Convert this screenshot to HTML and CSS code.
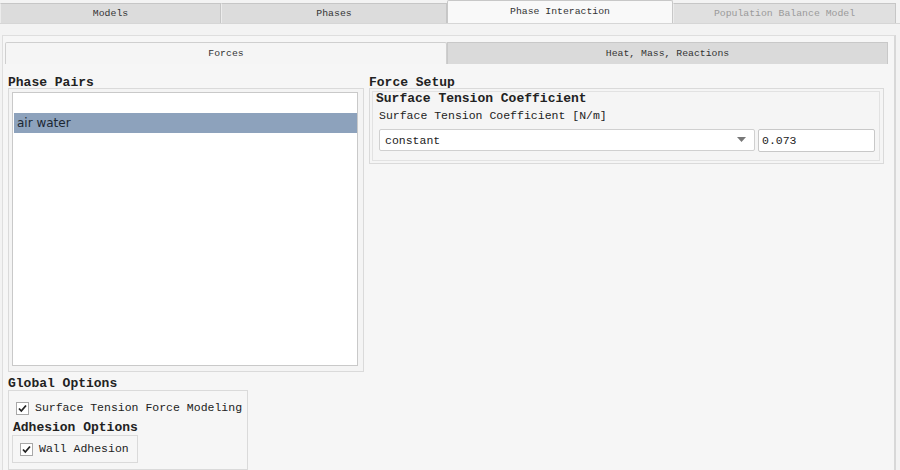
FILE: index.html
```html
<!DOCTYPE html>
<html>
<head>
<meta charset="utf-8">
<link rel="stylesheet" href="styles.css">
</head>
<body>
<div class="tabbar">
  <div class="tab">Models</div>
  <div class="tab">Phases</div>
  <div class="tab active">Phase Interaction</div>
  <div class="tab disabled">Population Balance Model</div>
</div>
<div class="pane">
  <div class="subtabs">
    <div class="subtab active">Forces</div>
    <div class="subtab">Heat, Mass, Reactions</div>
  </div>
  <div class="content">
    <div class="leftcol">
      <div class="title">Phase Pairs</div>
      <div class="group pairs">
        <div class="list">
          <div class="row sel">air water</div>
        </div>
      </div>
      <div class="title gtitle">Global Options</div>
      <div class="group global">
        <label class="check"><span class="box"><svg width="11" height="11" viewBox="0 0 11 11"><path d="M2 5.5 L4.3 8 L9 2.5" fill="none" stroke="#222" stroke-width="1.8"/></svg></span>Surface Tension Force Modeling</label>
        <div class="subtitle">Adhesion Options</div>
        <div class="group adhesion">
          <label class="check"><span class="box"><svg width="11" height="11" viewBox="0 0 11 11"><path d="M2 5.5 L4.3 8 L9 2.5" fill="none" stroke="#222" stroke-width="1.8"/></svg></span>Wall Adhesion</label>
        </div>
      </div>
    </div>
    <div class="rightcol">
      <div class="title">Force Setup</div>
      <div class="group setup">
        <div class="inner">
          <div class="subtitle">Surface Tension Coefficient</div>
          <div class="lbl">Surface Tension Coefficient [N/m]</div>
          <div class="inputs">
            <div class="combo"><span>constant</span><svg width="9" height="6" viewBox="0 0 9 6"><path d="M0 0 H9 L4.5 5 Z" fill="#777"/></svg></div>
            <div class="value">0.073</div>
          </div>
        </div>
      </div>
    </div>
  </div>
</div>
</body>
</html>
```

FILE: styles.css
```css
html, body {
  margin: 0;
  padding: 0;
}
body {
  width: 900px;
  height: 470px;
  overflow: hidden;
  background: #f3f3f3;
  font-family: "Liberation Mono", "DejaVu Sans Mono", monospace;
  color: #222;
}
.tabbar {
  display: grid;
  grid-template-columns: 221px 226px 226px 223px;
  height: 24px;
  align-items: end;
  border-bottom: 1px solid #d6d6d6;
  box-sizing: border-box;
}
.tab {
  height: 20px;
  box-sizing: border-box;
  background: #dcdcdc;
  border: 1px solid #c6c6c6;
  border-bottom: none;
  border-left-color: #ececec;
  font-size: 9.8px;
  line-height: 19px;
  text-align: center;
  color: #333;
}
.tab.active {
  height: 23px;
  background: #f9f9f9;
  border-color: #c8c8c8;
  border-radius: 2px 2px 0 0;
  line-height: 22px;
}
.tab.disabled {
  color: #9a9a9a;
  background: #e0e0e0;
}
.pane {
  margin: 11px 4px 0 2px;
  height: 440px;
  border: 1px solid #dedede;
  border-right: 2px solid #d8d8d8;
  background: #f6f6f6;
  padding: 6px 5px 0 2px;
  box-sizing: border-box;
}
.subtabs {
  display: grid;
  grid-template-columns: 442px 441px;
  height: 21px;
}
.subtab {
  box-sizing: border-box;
  background: #dadada;
  border: 1px solid #c8c8c8;
  border-bottom: none;
  font-size: 9.8px;
  line-height: 21px;
  text-align: center;
  color: #333;
}
.subtab.active {
  background: #f5f5f5;
  border-color: #cfcfcf;
  border-radius: 2px 2px 0 0;
}
.content {
  display: flex;
  gap: 5px;
  padding: 13px 0 0 3px;
}
.leftcol {
  width: 356px;
  display: flex;
  flex-direction: column;
}
.rightcol {
  width: 515px;
  display: flex;
  flex-direction: column;
}
.title {
  font-weight: bold;
  font-size: 13px;
  line-height: 14px;
  height: 12px;
  color: #222;
}
.gtitle {
  margin-top: 5px;
  height: 13px;
}
.group {
  border: 1px solid #dadada;
  box-sizing: border-box;
}
.pairs {
  height: 284px;
  padding: 3px 5px 5px 3px;
  background: #f4f4f4;
}
.list {
  height: 274px;
  box-sizing: border-box;
  background: #fff;
  border: 1px solid #c9c9c9;
  padding: 20px 0 0 1px;
}
.row {
  font-family: "DejaVu Sans", sans-serif;
  font-size: 12px;
  height: 20px;
  line-height: 20px;
  padding-left: 3px;
  color: #1c2733;
}
.row.sel {
  background: #8da2bc;
}
.global {
  width: 240px;
  height: 80px;
  padding: 9px 0 0 3px;
}
.check {
  display: flex;
  align-items: center;
  font-size: 11.5px;
  line-height: 16px;
  height: 16px;
  color: #222;
}
.box {
  width: 11px;
  height: 11px;
  border: 1px solid #a8a8a8;
  background: #fff;
  margin: 0 6px 0 4px;
  display: flex;
}
.subtitle {
  font-weight: bold;
  font-size: 13px;
  line-height: 14px;
  color: #222;
}
.global .subtitle {
  margin: 5px 0 0 1px;
}
.adhesion {
  width: 126px;
  height: 28px;
  padding: 5px 0 0 3px;
}
.setup {
  height: 76px;
  padding: 2px 3px 2px 2px;
  background: #f5f5f5;
}
.inner {
  border: 1px solid #e2e2e2;
  height: 100%;
  box-sizing: border-box;
  padding: 0 4px 0 3px;
}
.lbl {
  font-size: 11.5px;
  line-height: 14px;
  margin: 3px 0 0 3px;
}
.inputs {
  display: flex;
  gap: 3px;
  margin: 6px 0 0 3px;
}
.combo {
  width: 376px;
  height: 22px;
  box-sizing: border-box;
  background: #fff;
  border: 1px solid #d0d0d0;
  border-radius: 2px;
  display: flex;
  align-items: center;
  justify-content: space-between;
  padding: 0 8px 0 5px;
  font-size: 11.5px;
}
.value {
  width: 117px;
  height: 23px;
  box-sizing: border-box;
  background: #fff;
  border: 1px solid #c8c8c8;
  border-radius: 2px;
  padding: 0 3px;
  font-size: 11.5px;
  line-height: 22px;
}
```
